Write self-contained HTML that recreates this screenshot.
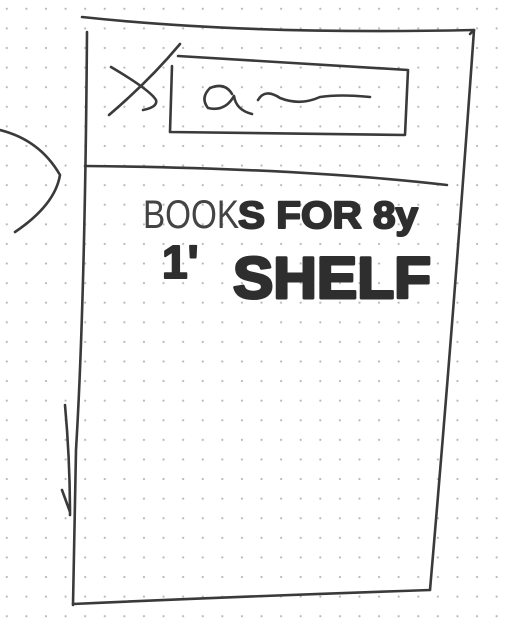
<!DOCTYPE html>
<html><head><style>
html,body{margin:0;padding:0;background:#fff;}
body{width:514px;height:629px;overflow:hidden;
background-image:radial-gradient(circle,#b8b8b8 0.9px,transparent 1.3px);
background-size:19.6px 19.6px;background-position:-3px -1px;}
svg{position:absolute;left:0;top:0}
</style></head><body>
<svg width="514" height="629" viewBox="0 0 514 629" fill="none" stroke="#3a3a3a" stroke-width="2.6" stroke-linecap="round" stroke-linejoin="round">
<path d="M82 17 Q250 35 474 30 L470 34"/>
<path d="M87 32 Q85 300 76 450 L73 605"/>
<path d="M474 30 Q455 300 430 590"/>
<path d="M73 604 Q250 596 430 590"/>
<path d="M85 166 Q300 168 447 185"/>
<path d="M178 56 L408 70 L405 135 L170 132 L172 66"/>
<path d="M111 67 Q150 90 156 100 Q158 107 143 110"/>
<path d="M109 115 Q150 80 180 44"/>
<path d="M232 94 Q225 82 210 88 Q200 98 208 108 Q225 112 234 96 Q236 110 252 114"/>
<path d="M258 100 Q265 88 280 98 Q300 106 320 97 Q340 94 370 97"/>
<path d="M0 130 Q40 140 60 175 Q55 205 15 232"/>
<path d="M65 405 Q70 460 70 515 M62 490 L70 512"/>
<g fill="#2e2e2e" stroke="none" font-family="Liberation Sans, sans-serif">
<text x="143" y="228" font-size="40" font-weight="400" textLength="96" lengthAdjust="spacingAndGlyphs" fill="#444">BOOK</text>
<text x="238" y="228" font-size="38" font-weight="700" textLength="180" lengthAdjust="spacingAndGlyphs" stroke="#2e2e2e" stroke-width="2">S FOR 8y</text>
<text x="162" y="278" font-size="46" font-weight="700" stroke="#2e2e2e" stroke-width="2">1'</text>
<text x="233" y="298" font-size="58" font-weight="700" textLength="198" lengthAdjust="spacingAndGlyphs" stroke="#2e2e2e" stroke-width="3">SHELF</text>
</g>
</svg>
</body></html>
